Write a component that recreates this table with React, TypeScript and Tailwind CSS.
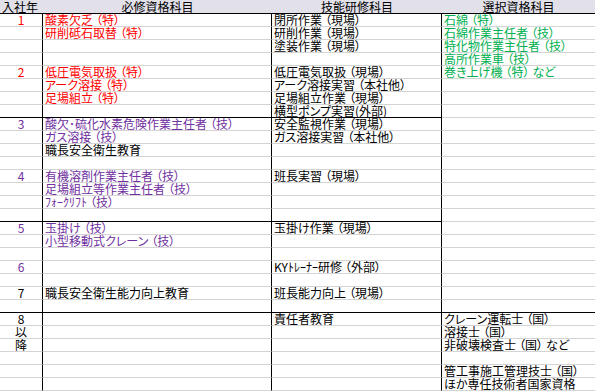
import React from 'react';

type Tone = 'r' | 'p' | 'g' | 'k';
type Cell = [string, Tone?];

interface Row {
  a?: Cell;
  b?: Cell;
  c?: Cell;
  d?: Cell;
  line?: 'abc' | 'all';
}

const tones: Record<Tone, string> = {
  r: 'text-[#ff0000]',
  p: 'text-[#7030a0]',
  g: 'text-[#00b050]',
  k: 'text-black',
};

const rows: Row[] = [
  { a: ['1', 'r'], b: ['酸素欠乏（特）', 'r'], c: ['閉所作業（現場）'], d: ['石綿（特）', 'g'] },
  { b: ['研削砥石取替（特）', 'r'], c: ['研削作業（現場）'], d: ['石綿作業主任者（技）', 'g'] },
  { c: ['塗装作業（現場）'], d: ['特化物作業主任者（技）', 'g'] },
  { d: ['高所作業車（技）', 'g'] },
  { a: ['2', 'r'], b: ['低圧電気取扱（特）', 'r'], c: ['低圧電気取扱（現場）'], d: ['巻き上げ機（特）など', 'g'] },
  { b: ['アーク溶接（特）', 'r'], c: ['アーク溶接実習（本社他）'] },
  { b: ['足場組立（特）', 'r'], c: ['足場組立作業（現場）'] },
  { c: ['横型ポンプ実習(外部)'], line: 'abc' },
  { a: ['3', 'p'], b: ['酸欠･硫化水素危険作業主任者（技）', 'p'], c: ['安全監視作業（現場）'] },
  { b: ['ガス溶接（技）', 'p'], c: ['ガス溶接実習（本社他）'] },
  { b: ['職長安全衛生教育'] },
  {},
  { a: ['4', 'p'], b: ['有機溶剤作業主任者（技）', 'p'], c: ['班長実習（現場）'] },
  { b: ['足場組立等作業主任者（技）', 'p'] },
  { b: ['ﾌｫｰｸﾘﾌﾄ（技）', 'p'] },
  { line: 'abc' },
  { a: ['5', 'p'], b: ['玉掛け（技）', 'p'], c: ['玉掛け作業（現場）'] },
  { b: ['小型移動式クレーン（技）', 'p'] },
  {},
  { a: ['6', 'p'], c: ['KYﾄﾚｰﾅｰ研修（外部）'] },
  {},
  { a: ['7'], b: ['職長安全衛生能力向上教育'], c: ['班長能力向上（現場）'] },
  { line: 'all' },
  { a: ['8'], c: ['責任者教育'], d: ['クレーン運転士（国）'] },
  { a: ['以'], d: ['溶接士（国）'] },
  { a: ['降'], d: ['非破壊検査士（国）など'] },
  {},
  { d: ['管工事施工管理技士（国）'] },
  { d: ['ほか専任技術者国家資格'] },
];

// palt squeezes the full-width brackets too much; give them some air back
const withParens = (s: string) =>
  s.split(/(（|）)/).map((part, i) =>
    part === '（' ? (
      <span key={i} className="ml-[3px]">（</span>
    ) : part === '）' ? (
      <span key={i} className="mr-[3px]">）</span>
    ) : (
      part
    )
  );

const Text = ({ cell, center }: { cell?: Cell; center?: boolean }) => {
  if (!cell) return null;
  return (
    <span className={`block whitespace-nowrap ${center ? 'text-center' : 'pl-[2px]'} ${tones[cell[1] ?? 'k']}`}>
      {withParens(cell[0])}
    </span>
  );
};

export default function App() {
  return (
    <div className="w-[595px] h-[391px] overflow-hidden bg-white text-[12px] leading-[12px] [font-family:'Noto_Sans_CJK_JP','Noto_Sans',sans-serif] [font-feature-settings:'palt']">
      {/* header */}
      <div className="grid grid-cols-[43px_229px_170px_153px] h-[14px] bg-[#e2e1ea] border-b border-black text-black">
        <div className="pl-[2px] leading-[13px]">入社年</div>
        <div className="text-center leading-[13px]">必修資格科目</div>
        <div className="text-center leading-[13px]">技能研修科目</div>
        <div className="text-center leading-[13px]">選択資格科目</div>
      </div>

      {rows.map((row, i) => {
        const abc = row.line ? 'border-black' : 'border-[#d4d4d4]';
        const d = row.line === 'all' ? 'border-black' : 'border-[#d4d4d4]';
        return (
          <div key={i} className="grid grid-cols-[43px_229px_170px_153px] h-[13px]">
            <div className={`border-b border-r border-r-black ${abc}`}>
              <Text cell={row.a} center />
            </div>
            <div className={`border-b border-r border-r-black ${abc}`}>
              <Text cell={row.b} />
            </div>
            <div className={`border-b border-r border-r-black ${abc}`}>
              <Text cell={row.c} />
            </div>
            <div className={`border-b ${d}`}>
              <Text cell={row.d} />
            </div>
          </div>
        );
      })}
    </div>
  );
}
